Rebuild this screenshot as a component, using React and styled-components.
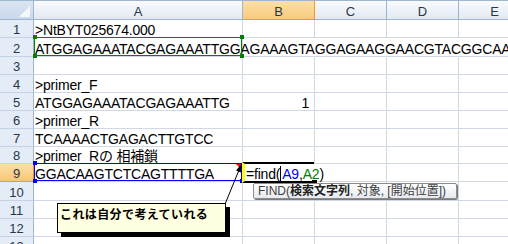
import React from 'react';
import styled, { createGlobalStyle } from 'styled-components';

const GlobalStyle = createGlobalStyle`
  html, body { margin: 0; padding: 0; background: #fff; }
  body { font-family: "Liberation Sans", "Noto Sans CJK JP", sans-serif; }
`;

const COLS = ['A', 'B', 'C', 'D', 'E'];

// 行の高さ (下罫線込み)
const ROWS = [
  { n: 1, h: 18, A: '>NtBYT025674.000' },
  { n: 2, h: 19, A: 'ATGGAGAAATACGAGAAATTGGAGAAAGTAGGAGAAGGAACGTACGGCAA', spill: true, ref: 'green' },
  { n: 3, h: 18 },
  { n: 4, h: 18, A: '>primer_F' },
  { n: 5, h: 18, A: 'ATGGAGAAATACGAGAAATTG', B: '1' },
  { n: 6, h: 18, A: '>primer_R' },
  { n: 7, h: 18, A: 'TCAAAACTGAGACTTGTCC' },
  { n: 8, h: 17, A: '>primer_Rの 相補鎖' },
  { n: 9, h: 18, A: 'GGACAAGTCTCAGTTTTGA', ref: 'blue', editing: true },
  { n: 10, h: 19 },
  { n: 11, h: 18 },
  { n: 12, h: 18 },
  { n: 13, h: 18 },
];

const Viewport = styled.div`
  width: 508px;
  height: 244px;
  overflow: hidden;
  position: relative;
  background: #fff;
`;

const Sheet = styled.div`
  position: relative;
  width: 531px;
  display: grid;
  grid-template-columns: 34px 209px 72px 72px 72px 72px;
  grid-template-rows: 20px ${ROWS.map(r => r.h + 'px').join(' ')};
`;

const Corner = styled.div`
  position: relative;
  box-sizing: border-box;
  border-top: 1px solid #9eb6ce;
  border-right: 1px solid #9eb6ce;
  border-bottom: 1px solid #9eb6ce;
  background: linear-gradient(#dbe5f2, #c9d8ec);

  &::after {
    content: '';
    position: absolute;
    right: 3px;
    bottom: 2px;
    width: 0;
    height: 0;
    border-left: 11px solid transparent;
    border-bottom: 11px solid #f4f7fb;
  }
`;

const ColHead = styled.div`
  box-sizing: border-box;
  border-top: 1px solid #9eb6ce;
  border-right: 1px solid ${p => (p.$active ? '#f29536' : '#9eb6ce')};
  border-bottom: 1px solid ${p => (p.$active ? '#f29536' : '#9eb6ce')};
  background: ${p =>
    p.$active
      ? 'linear-gradient(#fbdfa9, #f8cb7c)'
      : 'linear-gradient(#f9fbfd, #e2e9f2)'};
  display: flex;
  align-items: center;
  justify-content: center;
  padding-top: 2px;
  font-size: 13px;
  color: #27364a;
`;

const RowHead = styled.div`
  box-sizing: border-box;
  border-right: 1px solid ${p => (p.$active ? '#f29536' : '#9eb6ce')};
  border-bottom: 1px solid ${p => (p.$active ? '#f29536' : '#c3d2e5')};
  background: ${p =>
    p.$active ? 'linear-gradient(#fbdfa9, #f7c873)' : '#e4ecf7'};
  display: flex;
  align-items: flex-end;
  justify-content: center;
  line-height: 14px;
  font-size: 13px;
  color: #27364a;
`;

const Cell = styled.div`
  position: relative;
  box-sizing: border-box;
  border-right: 1px solid ${p => (p.$noRight ? 'transparent' : '#d0d7e5')};
  border-bottom: 1px solid #d0d7e5;
  display: flex;
  align-items: flex-end;
  justify-content: ${p => (p.$num ? 'flex-end' : 'flex-start')};
  padding: 0 ${p => (p.$num ? '5px' : '0')} 0 1px;
  font-size: 14px;
  line-height: 14px;
  letter-spacing: -0.2px;
  white-space: nowrap;
  color: #000;
  z-index: ${p => (p.$front ? 3 : 1)};
`;

const RefBox = styled.div`
  position: absolute;
  top: -1px;
  left: 0;
  right: 0;
  bottom: 0;
  border: 1px solid ${p => (p.$color === 'blue' ? '#0000ff' : '#008000')};
  pointer-events: none;
`;

const Handle = styled.span`
  position: absolute;
  width: 4px;
  height: 4px;
  background: ${p => (p.$color === 'blue' ? '#0000ff' : '#008000')};
  ${p => (p.$y === 't' ? 'top: -3px;' : 'bottom: -3px;')}
  ${p => (p.$x === 'l' ? 'left: -2px;' : 'right: -3px;')}
`;

const CommentMark = styled.span`
  position: absolute;
  top: 0;
  right: 1px;
  width: 0;
  height: 0;
  border-left: 5px solid transparent;
  border-top: 5px solid #ff0000;
`;

const EditBox = styled.div`
  position: absolute;
  top: -2px;
  left: -1px;
  right: 0;
  bottom: -2px;
  border-top: 2px solid #000;
  border-bottom: 2px solid #000;
  border-left: 3px solid #ffff00;
  pointer-events: none;
`;

const FillHandle = styled.span`
  position: absolute;
  right: -3px;
  bottom: -4px;
  width: 5px;
  height: 5px;
  background: #000;
`;

const Formula = styled.span`
  position: relative;
  padding-left: 2px;
`;

const RefText = styled.span`
  color: ${p => (p.$color === 'blue' ? '#0000ff' : '#008000')};
`;

const Caret = styled.span`
  display: inline-block;
  width: 1px;
  height: 15px;
  margin: 0 1px -2px 0;
  background: #000;
`;

const Tooltip = styled.div`
  position: absolute;
  left: 253px;
  top: 183px;
  width: 204px;
  height: 16px;
  box-sizing: border-box;
  border: 1px solid #8c8c8c;
  border-radius: 2px;
  background: linear-gradient(#ffffff, #e6eaf0);
  box-shadow: 1px 1px 0 #7a7a7a;
  padding: 0 0 0 4px;
  font-size: 12px;
  line-height: 14px;
  color: #404040;
  white-space: nowrap;
  z-index: 5;

  b { font-weight: bold; color: #222; }
`;

const Comment = styled.div`
  position: absolute;
  left: 57px;
  top: 203px;
  width: 169px;
  height: 30px;
  box-sizing: border-box;
  border: 1px solid #000;
  background: #ffffe1;
  box-shadow: 4px 4px 0 #000;
  padding: 3px 0 0 2px;
  font-family: "Noto Sans CJK JP", sans-serif;
  font-weight: bold;
  font-size: 12px;
  line-height: 14px;
  letter-spacing: 0.4px;
  color: #000;
  white-space: nowrap;
  z-index: 5;
`;

const Arrow = styled.svg`
  position: absolute;
  left: 0;
  top: 0;
  width: 508px;
  height: 244px;
  pointer-events: none;
  z-index: 6;
`;

function renderCell(row, col) {
  const key = `${col}${row.n}`;
  if (col === 'A') {
    return (
      <Cell key={key} $front={row.spill}>
        {row.A}
        {row.ref && (
          <RefBox $color={row.ref}>
            <Handle $color={row.ref} $y="t" $x="l" />
            {row.ref !== 'blue' && <Handle $color={row.ref} $y="t" $x="r" />}
            <Handle $color={row.ref} $y="b" $x="l" />
            <Handle $color={row.ref} $y="b" $x="r" />
          </RefBox>
        )}
        {row.editing && <CommentMark />}
      </Cell>
    );
  }
  if (col === 'B' && row.editing) {
    return (
      <Cell key={key} $front $noRight>
        <EditBox>
          <FillHandle />
        </EditBox>
        <Formula>
          =find(<Caret />
          <RefText $color="blue">A9</RefText>,<RefText $color="green">A2</RefText>)
        </Formula>
      </Cell>
    );
  }
  return (
    <Cell key={key} $noRight={row.spill} $num={col === 'B' && row.B}>
      {col === 'B' ? row.B : null}
    </Cell>
  );
}

const App = () => {
  return (
    <Viewport>
      <GlobalStyle />
      <Sheet>
        {/* 列見出し */}
        <Corner />
        {COLS.map(c => (
          <ColHead key={c} $active={c === 'B'}>
            {c}
          </ColHead>
        ))}

        {/* 行 */}
        {ROWS.map(row => (
          <React.Fragment key={row.n}>
            <RowHead $active={row.editing}>{row.n}</RowHead>
            {COLS.map(c => renderCell(row, c))}
          </React.Fragment>
        ))}
      </Sheet>

      <Tooltip>
        FIND(<b>検索文字列</b>, 対象, [開始位置])
      </Tooltip>

      <Comment>これは自分で考えていれる</Comment>

      <Arrow viewBox="0 0 508 244">
        <line x1="225.5" y1="203" x2="239" y2="170" stroke="#000" strokeWidth="1" />
        <polygon points="241.5,164 241,172.5 236,170.5" fill="#000" />
      </Arrow>
    </Viewport>
  );
};

export default App;
